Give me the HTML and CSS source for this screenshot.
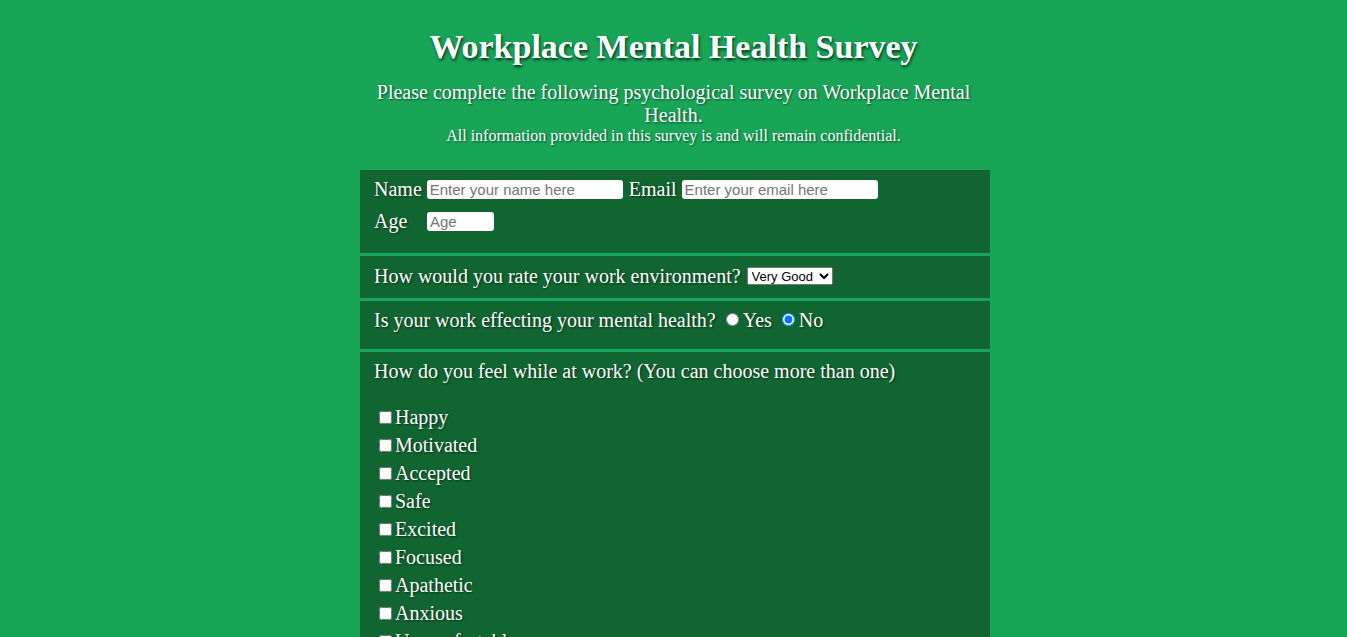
FILE: index.html
```html
<!DOCTYPE html>
<html lang="en">
<head>
<meta charset="utf-8">
<title>Workplace Mental Health Survey</title>
<link rel="stylesheet" href="styles.css">
</head>
<body>
<header class="header">
  <h1 class="title">Workplace Mental Health Survey</h1>
  <p class="intro">Please complete the following psychological survey on Workplace Mental Health.</p>
  <p class="note">All information provided in this survey is and will remain confidential.</p>
</header>
<form class="survey">
  <section class="panel panel-info">
    <div class="row">
      <label class="lbl" for="name">Name</label>
      <input class="field field-wide" id="name" type="text" placeholder="Enter your name here">
      <label class="lbl lbl-gap" for="email">Email</label>
      <input class="field field-wide" id="email" type="email" placeholder="Enter your email here">
    </div>
    <div class="row">
      <label class="lbl lbl-fixed" for="age">Age</label>
      <input class="field field-age" id="age" type="number" placeholder="Age">
    </div>
  </section>
  <section class="panel panel-rate">
    <label for="env">How would you rate your work environment?</label>
    <select class="choice" id="env">
      <option>Very Good</option>
      <option>Good</option>
      <option>Average</option>
      <option>Poor</option>
      <option>Very Poor</option>
    </select>
  </section>
  <section class="panel panel-radio">
    <span>Is your work effecting your mental health?</span>
    <label class="opt"><input class="radio" type="radio" name="effect">Yes</label><label class="opt opt-next"><input class="radio" type="radio" name="effect" checked>No</label>
  </section>
  <section class="panel panel-feel">
    <p class="question">How do you feel while at work? (You can choose more than one)</p>
    <ul class="checks">
      <li><label><input class="box" type="checkbox">Happy</label></li>
      <li><label><input class="box" type="checkbox">Motivated</label></li>
      <li><label><input class="box" type="checkbox">Accepted</label></li>
      <li><label><input class="box" type="checkbox">Safe</label></li>
      <li><label><input class="box" type="checkbox">Excited</label></li>
      <li><label><input class="box" type="checkbox">Focused</label></li>
      <li><label><input class="box" type="checkbox">Apathetic</label></li>
      <li><label><input class="box" type="checkbox">Anxious</label></li>
      <li><label><input class="box" type="checkbox">Uncomfortable</label></li>
      <li><label><input class="box" type="checkbox">Stressed</label></li>
    </ul>
  </section>
</form>
</body>
</html>
```

FILE: styles.css
```css
html, body {
  margin: 0;
  padding: 0;
}

body {
  background: #18a558;
  color: #ffffff;
  font-family: "Liberation Serif", "Times New Roman", serif;
  font-size: 20px;
  text-shadow: 1px 1px 2px rgba(0, 0, 0, 0.55);
}

.header {
  width: 600px;
  margin: 0 auto;
  text-align: center;
  padding-top: 27px;
}

.title {
  margin: 0 0 15px;
  font-size: 34px;
  line-height: 39px;
  font-weight: bold;
  text-shadow: 1px 2px 3px rgba(0, 0, 0, 0.7);
}

.intro {
  margin: 0;
  font-size: 20px;
  line-height: 23px;
}

.note {
  margin: 0;
  font-size: 16px;
  line-height: 18px;
}

.survey {
  width: 630px;
  margin: 25px auto 0 calc(50% - 313.5px);
  display: flex;
  flex-direction: column;
  gap: 3px;
}

.panel {
  background: #116530;
  padding: 8px 14px;
  line-height: 23px;
}

.panel-info {
  padding: 3px 14px 16px;
}

.row {
  display: flex;
  align-items: center;
  height: 32px;
}

.lbl {
  margin-right: 5px;
}

.lbl-gap {
  margin-left: 6px;
}

.lbl-fixed {
  width: 48px;
}

.field {
  box-sizing: border-box;
  height: 19px;
  border: none;
  border-radius: 3px;
  padding: 0 3px;
  background: #ffffff;
  font-family: "Liberation Sans", Arial, sans-serif;
  font-size: 15px;
  color: #222;
  text-shadow: none;
}

.field::placeholder {
  color: #757575;
}

.field-wide {
  width: 196px;
}

.field-age {
  width: 67px;
  -moz-appearance: textfield;
}

.field-age::-webkit-outer-spin-button,
.field-age::-webkit-inner-spin-button {
  -webkit-appearance: none;
  margin: 0;
}

.panel-rate {
  padding: 9px 14px 10px;
}

.choice {
  height: 18px;
  width: 86px;
  font-family: "Liberation Sans", Arial, sans-serif;
  font-size: 13px;
  vertical-align: 2px;
  text-shadow: none;
  margin-left: 1px;
}

.panel-radio {
  padding: 8px 14px 17px;
}

.opt {
  margin-left: 5px;
}

.opt-next {
  margin-left: 10px;
}

.radio {
  margin: 0 4px 0 0;
  width: 13px;
  height: 13px;
  vertical-align: 1px;
}

.panel-feel {
  padding: 8px 14px 20px;
}

.question {
  margin: 0 0 20px;
}

.checks {
  list-style: none;
  margin: 0;
  padding: 0;
}

.checks li {
  height: 28px;
  display: flex;
  align-items: center;
}

.box {
  margin: 0 3px 0 5px;
  width: 13px;
  height: 13px;
}
```
